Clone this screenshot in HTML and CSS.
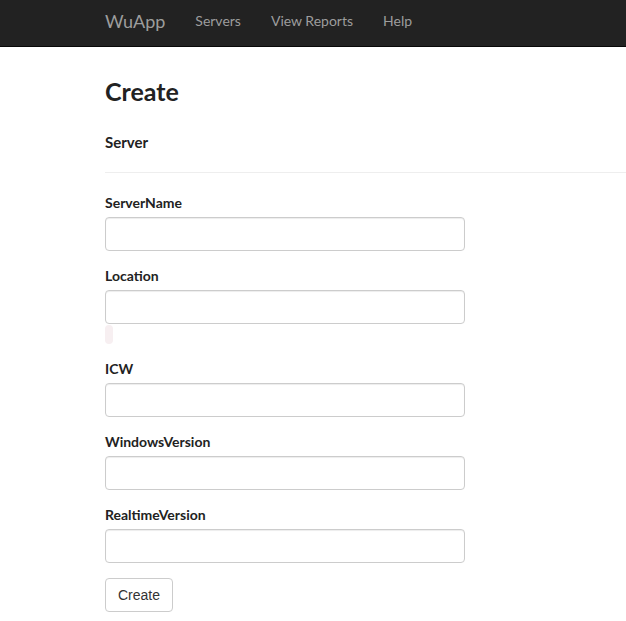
FILE: index.html
```html
<!DOCTYPE html>
<html>
<head>
<meta charset="utf-8">
<title>Create - WuApp</title>
<link rel="stylesheet" href="styles.css">
</head>
<body>
<nav class="navbar">
  <a class="brand" href="#">WuApp</a>
  <ul class="nav-links">
    <li><a href="#">Servers</a></li>
    <li><a href="#">View Reports</a></li>
    <li><a href="#">Help</a></li>
  </ul>
</nav>
<main class="content">
  <h2 class="title">Create</h2>
  <h4 class="subtitle">Server</h4>
  <hr class="rule">
  <form class="form">
    <div class="group">
      <label class="label">ServerName</label>
      <input class="input" type="text">
    </div>
    <div class="group">
      <label class="label">Location</label>
      <input class="input" type="text">
      <span class="validation"></span>
    </div>
    <div class="group">
      <label class="label">ICW</label>
      <input class="input" type="text">
    </div>
    <div class="group">
      <label class="label">WindowsVersion</label>
      <input class="input" type="text">
    </div>
    <div class="group">
      <label class="label">RealtimeVersion</label>
      <input class="input" type="text">
    </div>
    <div class="group">
      <button class="btn" type="button">Create</button>
    </div>
  </form>
</main>
</body>
</html>
```

FILE: styles.css
```css
* { box-sizing: border-box; }
html, body { margin: 0; padding: 0; }
body {
  font-family: Lato, "Open Sans", sans-serif;
  font-size: 14px;
  line-height: 20px;
  color: #222;
  background: #fff;
  overflow: hidden;
}
.navbar {
  height: 47px;
  background: #222;
  border-bottom: 1px solid #080808;
  display: flex;
  align-items: center;
  padding-left: 105px;
  padding-bottom: 4px;
}
.brand {
  color: #9d9d9d;
  font-size: 18px;
  text-decoration: none;
  margin-right: 30px;
}
.nav-links {
  list-style: none;
  margin: 0;
  padding: 0;
  display: flex;
  gap: 30px;
}
.nav-links a {
  color: #9d9d9d;
  font-size: 14px;
  text-decoration: none;
}
.content {
  padding-left: 105px;
}
.title {
  margin: 27px 0 0;
  font-size: 25px;
  line-height: 34px;
  font-weight: 700;
  color: #222;
}
.subtitle {
  margin: 23px 0 0;
  font-size: 15px;
  line-height: 22px;
  font-weight: 700;
}
.rule {
  margin: 19px 0 0;
  border: 0;
  border-top: 1px solid #eee;
}
.form {
  padding-top: 20px;
}
.group {
  margin-bottom: 15px;
}
.label {
  display: block;
  font-weight: 700;
  margin-bottom: 4px;
}
.input {
  display: block;
  width: 360px;
  height: 34px;
  border: 1px solid #ccc;
  border-radius: 4px;
  box-shadow: inset 0 1px 1px rgba(0,0,0,0.075);
  font: inherit;
  padding: 6px 12px;
}
.validation {
  display: block;
  width: 8px;
  height: 19px;
  margin-top: 1px;
  background: #f7eff1;
  border-radius: 4px;
}
.btn {
  height: 34px;
  padding: 0 12px;
  font-family: "Liberation Sans", Arial, sans-serif;
  font-size: 14px;
  color: #333;
  background: #fff;
  border: 1px solid #ccc;
  border-radius: 4px;
}
```
